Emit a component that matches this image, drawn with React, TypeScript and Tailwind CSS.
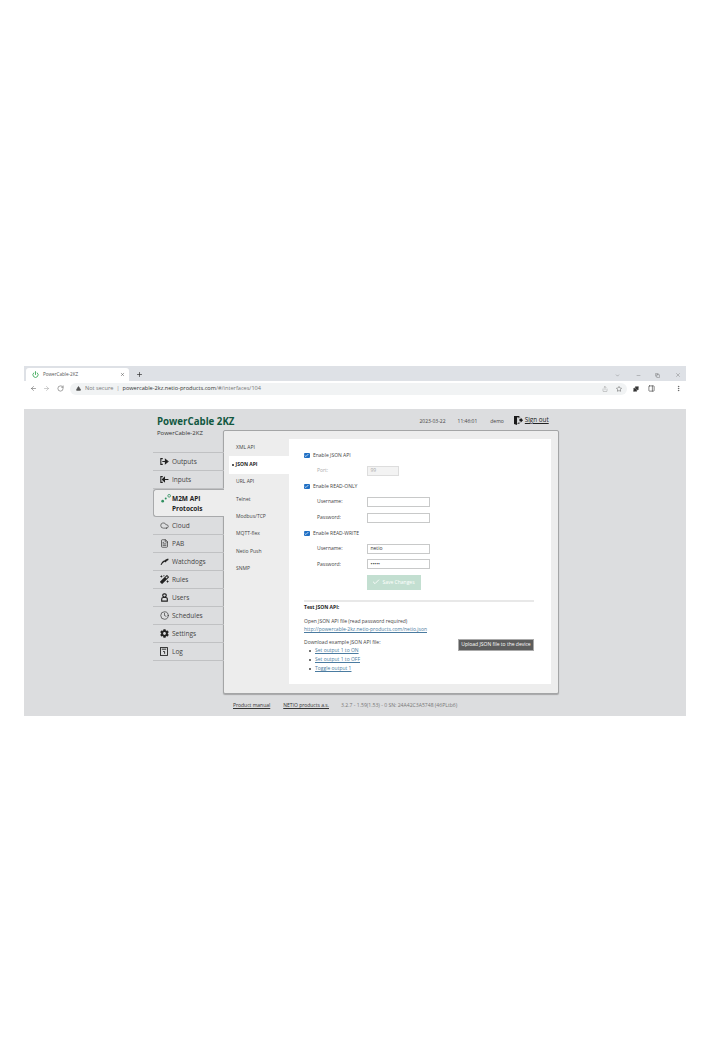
import React from "react";
import { ArrowLeft, ArrowRight, RotateCw, TriangleAlert, Power, X, Plus, ChevronDown, Minus, Share, Star, Puzzle, PanelRight, EllipsisVertical, Cloud, FileText, Clock, Check, Copy } from "lucide-react";
import { FaMagic, FaCog } from "react-icons/fa";

const Bracket = ({ dir }: { dir: "out" | "in" }) => (
  <svg width="9" height="7" viewBox="0 0 10 8" fill="none" stroke="#222" strokeWidth="1.2">
    <path d="M3 .7H.8v6.6H3" />
    {dir === "out" ? <path d="M2.5 4H7M6 1.6 9 4 6 6.4Z" fill="#222" /> : <path d="M9.5 4H5M5 1.6 2.5 4 5 6.4Z" fill="#222" />}
  </svg>
);

const M2M = () => (
  <svg width="10" height="9" viewBox="0 0 11 10">
    <circle cx="1.8" cy="8" r="1.5" fill="#2f8f5f" />
    <circle cx="5.2" cy="5" r="1.1" fill="#2f8f5f" />
    <circle cx="9" cy="2" r="1.5" fill="none" stroke="#2f8f5f" strokeWidth=".9" />
  </svg>
);

const Dog = () => (
  <svg width="9" height="7" viewBox="0 0 10 8" fill="#222">
    <path d="M.5 8C1.5 5 3 3.2 5.5 2.6 6.5 1.6 8 .8 9.7 1L9.2 2.6 7.4 3.4 6.6 5 5.4 4.4C3.8 5 2.4 6.4 1.5 8Z" />
  </svg>
);

const UserIcon = () => (
  <svg width="7" height="9" viewBox="0 0 8 10" fill="none" stroke="#222" strokeWidth="1.3">
    <rect x="2" y=".8" width="4" height="3.6" rx="1.6" />
    <path d="M.8 9.2V6.8Q.8 5 2.6 5H5.4Q7.2 5 7.2 6.8V9.2Z" />
  </svg>
);

const LogIcon = () => (
  <svg width="8" height="9" viewBox="0 0 9 10" fill="none" stroke="#222" strokeWidth="1">
    <rect x=".6" y=".6" width="7.8" height="8.8" />
    <path d="M2 2.4H7" />
    <path d="M3.5 5H5.2V7.6" />
  </svg>
);

const Door = () => (
  <svg width="9" height="9" viewBox="0 0 10 10" fill="#1a1a1a">
    <path d="M0 0H6V2.5H5V1.2L3.4 1.6V8.6L5 8.2V7H6V9H3.4V10L0 9Z" />
    <path d="M6 3.4H7.4V1.8L10 4.6 7.4 7.4V5.8H6Z" />
  </svg>
);

const nav: { label: string; icon: React.ReactNode }[] = [
  { label: "Cloud", icon: <Cloud size={9} strokeWidth={1.5} color="#222" /> },
  { label: "PAB", icon: <FileText size={9} strokeWidth={1.7} color="#222" /> },
  { label: "Watchdogs", icon: <Dog /> },
  { label: "Rules", icon: <FaMagic size={9} color="#222" /> },
  { label: "Users", icon: <UserIcon /> },
  { label: "Schedules", icon: <Clock size={9} strokeWidth={1.6} color="#222" /> },
  { label: "Settings", icon: <FaCog size={9} color="#222" /> },
  { label: "Log", icon: <LogIcon /> },
];

const NavRow = ({ icon, label }: { icon: React.ReactNode; label: string }) => (
  <div className="flex h-[18px] items-center border-b border-[#c0c1c3] pl-[5px] text-[6.5px] text-[#444]">
    <span className="flex w-[12px] items-center justify-center">{icon}</span>
    <span className="ml-[2px]">{label}</span>
  </div>
);

const subs = ["XML API", "JSON API", "URL API", "Telnet", "Modbus/TCP", "MQTT-flex", "Netio Push", "SNMP"];

const Field = ({ label, value, dots }: { label: string; value?: string; dots?: boolean }) => (
  <div className="flex h-[15.6px] items-center pl-[13px]">
    <span className="w-[49.5px] text-[5px] text-[#444]">{label}</span>
    <span className="flex h-[10px] w-[63px] items-center border border-[#c8c9c9] bg-white pl-[3px] text-[5px] text-[#333]">
      {dots ? "•••••" : value}
    </span>
  </div>
);

const CheckRow = ({ label }: { label: string }) => (
  <div className="flex h-[15.6px] items-center text-[5px] text-[#444]">
    <span className="mr-[3.5px] flex h-[5.5px] w-[5.5px] items-center justify-center rounded-[1px] bg-[#1f6fc4]">
      <Check size={5} strokeWidth={3.5} color="#fff" />
    </span>
    {label}
  </div>
);

export default function App() {
  return (
    <div className="h-[1063px] w-full bg-white pt-[366px] font-['Open_Sans','DejaVu_Sans',sans-serif]">
      <div className="mx-[24px] w-[662px]">
        {/* tab strip */}
        <div className="flex h-[15px] items-end bg-[#dee1e6]">
          <div className="ml-[2px] flex h-[13px] w-[103px] items-center rounded-t-[3px] bg-white pl-[6px] text-[4.6px] text-[#555]">
            <Power size={7} strokeWidth={2.6} color="#1a9a3c" />
            <span className="ml-[4px]">PowerCable-2KZ</span>
            <X size={5} strokeWidth={2} color="#333" className="ml-auto mr-[4px]" />
          </div>
          <Plus size={7} strokeWidth={2.4} color="#333" className="mb-[3px] ml-[7px]" />
          <div className="mb-[3px] ml-auto flex items-center text-[#555]">
            <ChevronDown size={5} strokeWidth={1.5} className="mr-[16px]" />
            <Minus size={5} strokeWidth={1.5} className="mr-[14px]" />
            <Copy size={5} strokeWidth={1.8} className="mr-[15px]" />
            <X size={6} strokeWidth={1.3} className="mr-[5px]" />
          </div>
        </div>
        {/* toolbar */}
        <div className="flex h-[15px] items-center bg-white text-[#666]">
          <ArrowLeft size={7} strokeWidth={2} className="ml-[6px]" />
          <ArrowRight size={7} strokeWidth={2} color="#aaa" className="ml-[6px]" />
          <RotateCw size={7} strokeWidth={2} className="ml-[7px]" />
          <div className="ml-[6px] flex h-[12px] w-[557px] items-center rounded-full bg-[#f1f3f4] pl-[5.5px] text-[5.6px]">
            <TriangleAlert size={5} strokeWidth={2.4} color="#555" fill="#555" />
            <span className="ml-[4.5px] text-[#777]">Not secure</span>
            <span className="mx-[3px] text-[#888]">|</span>
            <span className="text-[#333]">powercable-2kz.netio-products.com</span>
            <span className="text-[#777]">/#/interfaces/104</span>
            <Share size={6} strokeWidth={1.4} color="#777" className="ml-auto mr-[8px]" />
            <Star size={6} strokeWidth={1.8} color="#444" className="mr-[5px]" />
          </div>
          <Puzzle size={6} strokeWidth={2} color="#333" fill="#333" className="ml-[6px]" />
          <PanelRight size={7} strokeWidth={2} color="#333" className="ml-[8.5px]" />
          <EllipsisVertical size={7} strokeWidth={2} color="#444" className="ml-[20px]" />
        </div>
        <div className="h-[13px]" />
        {/* page */}
        <div className="h-[307px] bg-[#dcdddf]">
          <div className="flex h-[19px] items-end pl-[133px]">
            <span className="text-[9.7px] leading-[13px] font-bold text-[#12583f]">PowerCable 2KZ</span>
            <span className="mb-[2px] ml-[185px] text-[5px] leading-[10px] text-[#444]">2023-03-22</span>
            <span className="mb-[2px] ml-[12px] text-[5px] leading-[10px] text-[#444]">11:46:01</span>
            <span className="mb-[2px] ml-[13px] text-[5px] leading-[10px] text-[#444]">demo</span>
            <span className="mb-[2px] ml-[10px] flex items-center text-[6.3px] leading-[12px] text-[#222]">
              <Door />
              <span className="ml-[2px] underline">Sign out</span>
            </span>
          </div>
          <div className="flex pl-[129px]">
            {/* sidebar */}
            <div className="relative z-10 w-[71px] shrink-0">
              <div className="h-[24px] pl-[4px] pt-[0.5px] text-[6px] leading-[9px] text-[#333]">PowerCable-2KZ</div>
              <div className="border-b border-[#c0c1c3]" />
              <NavRow icon={<Bracket dir="out" />} label="Outputs" />
              <NavRow icon={<Bracket dir="in" />} label="Inputs" />
              <div className="flex h-[28px] rounded-l-[3px] border border-r-0 border-[#a8a9ab] bg-[#ededed] pl-[5px] pt-[4px] text-[6.5px] leading-[9.7px] font-bold text-[#222]">
                <span className="flex w-[13px] justify-center"><M2M /></span>
                <span>M2M API<br />Protocols</span>
              </div>
              {nav.map((n) => (
                <NavRow key={n.label} icon={n.icon} label={n.label} />
              ))}
            </div>
            {/* panel */}
            <div className="-ml-px mt-[2px] flex h-[264px] w-[336px] rounded-[2px] border border-[#a4a5a6] bg-[#ededed] pb-[9px] pl-[5px] pr-[7px] pt-[8px] shadow-[0_1px_1px_rgba(0,0,0,0.25)]">
              <div className="w-[60px] shrink-0">
                {subs.map((s) => (
                  <div
                    key={s}
                    className={
                      s === "JSON API"
                        ? "flex h-[17.3px] items-center bg-white pl-[3px] text-[5px] font-bold text-[#222]"
                        : "flex h-[17.3px] items-center pl-[7px] text-[5px] text-[#444]"
                    }
                  >
                    {s === "JSON API" && <span className="mr-[2px] h-[1.5px] w-[1.5px] rounded-full bg-[#222]" />}
                    {s}
                  </div>
                ))}
              </div>
              <div className="flex-1 bg-white pl-[15px] pr-[17px] pt-[8.5px]">
                <CheckRow label="Enable JSON API" />
                <div className="flex h-[15.6px] items-center pl-[13px]">
                  <span className="w-[49.5px] text-[5px] text-[#aaa]">Port:</span>
                  <span className="flex h-[10px] w-[32px] items-center border border-[#ddd] bg-[#f3f3f3] pl-[3px] text-[5px] text-[#aaa]">99</span>
                </div>
                <CheckRow label="Enable READ-ONLY" />
                <Field label="Username:" />
                <Field label="Password:" />
                <CheckRow label="Enable READ-WRITE" />
                <Field label="Username:" value="netio" />
                <Field label="Password:" dots />
                <div className="ml-[62.5px] mt-[2.7px] flex h-[15px] w-[54px] items-center justify-center bg-[#c3dfd1] text-[5px] text-white">
                  <Check size={8} strokeWidth={2.5} color="#fff" className="mr-[2px]" />
                  Save Changes
                </div>
                <div className="mt-[10px] border-t-2 border-[#e8e8e8]" />
                <div className="mt-[1.5px] text-[5px] leading-[8px] font-bold text-[#222]">Test JSON API:</div>
                <div className="mt-[6px] text-[5px] leading-[8px] text-[#444]">Open JSON API file (read password required)</div>
                <div className="text-[5px] leading-[8px] text-[#4a7ba0] underline">http://powercable-2kz.netio-products.com/netio.json</div>
                <div className="mt-[5px] flex items-start justify-between">
                  <div className="text-[5px] leading-[8px] text-[#444]">
                    <div>Download example JSON API file:</div>
                    {["Set output 1 to ON", "Set output 1 to OFF", "Toggle output 1"].map((t) => (
                      <div key={t} className="flex items-center pl-[5px]">
                        <span className="mr-[4px] h-[2px] w-[2px] rounded-full bg-[#444]" />
                        <span className="leading-[9px] text-[#4a7ba0] underline">{t}</span>
                      </div>
                    ))}
                  </div>
                  <div className="mt-[0.5px] flex h-[12px] w-[76px] items-center justify-center border border-[#aaa] bg-[#5d5d5d] text-[5px] text-white">
                    Upload JSON file to the device
                  </div>
                </div>
              </div>
            </div>
          </div>
          <div className="mt-[7px] flex h-[10px] items-center pl-[209px] text-[5px] text-[#333]">
            <span className="underline">Product manual</span>
            <span className="ml-[13px] underline">NETIO products a.s.</span>
            <span className="ml-[12px] text-[5.1px] text-[#777]">3.2.7 - 1.59(1.53) - 0 SN: 24A42C3A5748 (46PLtb6)</span>
          </div>
        </div>
      </div>
    </div>
  );
}
